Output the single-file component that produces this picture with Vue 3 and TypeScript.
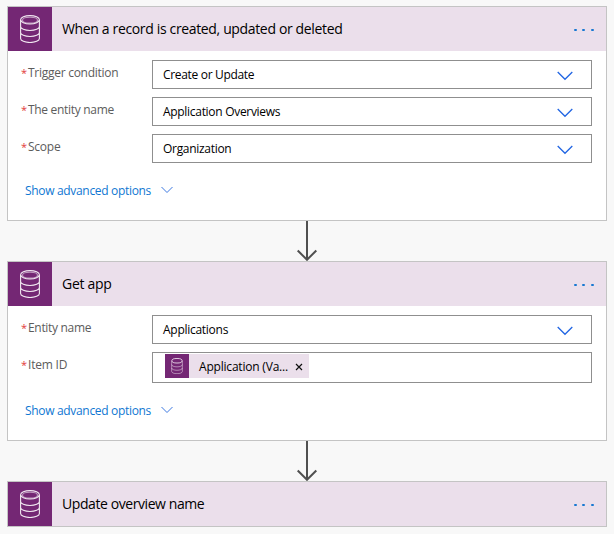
<script setup lang="ts">
interface Field {
  label: string
  value: string
  token?: boolean
  labelSpacing: number
  valueSpacing: number
}
interface Step {
  title: string
  spacing: number
  fields: Field[]
}

const steps: Step[] = [
  {
    title: 'When a record is created, updated or deleted',
    spacing: -0.35,
    fields: [
      { label: 'Trigger condition', value: 'Create or Update', labelSpacing: -0.27, valueSpacing: -0.32 },
      { label: 'The entity name', value: 'Application Overviews', labelSpacing: -0.31, valueSpacing: -0.3 },
      { label: 'Scope', value: 'Organization', labelSpacing: -0.25, valueSpacing: -0.3 },
    ],
  },
  {
    title: 'Get app',
    spacing: -0.3,
    fields: [
      { label: 'Entity name', value: 'Applications', labelSpacing: -0.32, valueSpacing: -0.27 },
      { label: 'Item ID', value: 'Application (Va...', token: true, labelSpacing: -0.2, valueSpacing: -0.2 },
    ],
  },
  { title: 'Update overview name', spacing: -0.42, fields: [] },
]

const cylinder =
  'M.6 5v18.500c0 2.300 4.200 4 9.400 4s9.400-1.700 9.400-4V5M.6 11.500c0 2.300 4.200 4 9.400 4s9.400-1.700 9.400-4M.6 17.500c0 2.300 4.200 4 9.400 4s9.400-1.700 9.400-4'
</script>

<template>
  <main class="flow">
    <template v-for="(step, i) in steps" :key="step.title">
      <svg v-if="i > 0" class="arrow" viewBox="0 0 22 40" aria-hidden="true">
        <path d="M11 0v38M1.700 29.500l9.300 9.300 9.300-9.300" />
      </svg>
      <section class="card">
        <header class="head">
          <span class="badge">
            <svg class="db" viewBox="0 0 20 28" aria-hidden="true">
              <ellipse cx="10" cy="4.800" rx="9.400" ry="4.200" />
              <ellipse cx="10" cy="5.200" rx="7.500" ry="2.900" class="faint" />
              <path :d="cylinder" />
            </svg>
          </span>
          <h2 :style="{ letterSpacing: step.spacing + 'px' }">{{ step.title }}</h2>
          <span class="dots"><i /><i /><i /></span>
        </header>
        <div v-if="step.fields.length" class="body">
          <div v-for="f in step.fields" :key="f.label" class="row">
            <label :style="{ letterSpacing: f.labelSpacing + 'px' }"><b>*</b>{{ f.label }}</label>
            <div class="box" :class="{ tall: f.token }">
              <span v-if="f.token" class="token">
                <span class="mini">
                  <svg viewBox="0 0 20 28" aria-hidden="true">
                    <ellipse cx="10" cy="4.800" rx="9" ry="4" />
                    <path :d="cylinder" class="faint" />
                  </svg>
                </span>
                <span class="name" :style="{ letterSpacing: f.valueSpacing + 'px' }">{{ f.value }}</span>
                <svg class="close" viewBox="0 0 8 8" aria-hidden="true"><path d="M1 1l6 6M7 1L1 7" /></svg>
              </span>
              <template v-else>
                <span :style="{ letterSpacing: f.valueSpacing + 'px' }">{{ f.value }}</span>
                <svg class="chev" viewBox="0 0 16 10" aria-hidden="true"><path d="M.7 1L8 8.300 15.300 1" /></svg>
              </template>
            </div>
          </div>
          <a class="more">
            <span>Show advanced options</span>
            <svg viewBox="0 0 12 8" aria-hidden="true"><path d="M.5 1L6 6.500 11.500 1" /></svg>
          </a>
        </div>
      </section>
    </template>
  </main>
</template>

<style>
body {
  background: #f8f8f8;
}
</style>

<style scoped>
.flow {
  box-sizing: border-box;
  width: 614px;
  height: 534px;
  padding: 6px 7px 0;
  display: flex;
  flex-direction: column;
  background: #f8f8f8;
  font-family: 'Open Sans', 'Noto Sans', sans-serif;
  overflow: hidden;
}
svg {
  display: block;
  fill: none;
  flex: none;
}
.card {
  border: 1px solid #c4c4c4;
  background: #fff;
  flex: none;
}
.head {
  height: 44px;
  display: flex;
  align-items: center;
  background: #ebdfeb;
}
.badge {
  width: 44px;
  height: 44px;
  display: grid;
  place-items: center;
  background: #742774;
}
.db {
  width: 20px;
  height: 28px;
  stroke: #f1e8f1;
  stroke-width: 1.1;
}
.faint {
  opacity: 0.6;
}
h2 {
  flex: 1;
  margin: 0 0 0 10px;
  font-size: 14px;
  line-height: 20px;
  font-weight: 400;
  color: #000;
  white-space: nowrap;
}
.dots {
  display: flex;
  gap: 5.500px;
  margin-right: 12.500px;
  padding-top: 2px;
}
.dots i {
  width: 2.800px;
  height: 2.500px;
  border-radius: 1px;
  background: #1677d2;
}
.body {
  padding: 9px 14px 0 13px;
}
.row {
  display: flex;
  align-items: flex-start;
  margin-bottom: 8px;
}
label {
  width: 131px;
  padding-top: 4px;
  font-size: 12px;
  line-height: 17px;
  color: #5c5c5c;
  white-space: nowrap;
}
label b {
  display: inline-block;
  width: 7px;
  font-size: 11px;
  line-height: 12px;
  font-weight: 400;
  color: #e23a3a;
}
.box {
  box-sizing: border-box;
  width: 440px;
  height: 29px;
  border: 1px solid #8f8f8f;
  padding: 0 18px 0 10px;
  display: flex;
  align-items: center;
  justify-content: space-between;
  font-size: 12px;
  line-height: 17px;
  color: #000;
}
.box.tall {
  height: 31px;
  padding-left: 12px;
  padding-top: 1px;
  align-items: flex-start;
}
.chev {
  width: 16px;
  height: 10px;
  margin-top: 2px;
  stroke: #2266e3;
  stroke-width: 1.3;
}
.token {
  width: 144px;
  height: 24px;
  display: flex;
  align-items: center;
  background: #ebdfeb;
}
.mini {
  width: 24px;
  height: 24px;
  display: grid;
  place-items: center;
  background: #742774;
}
.mini svg {
  width: 12px;
  height: 16px;
  stroke: #e8d8e8;
  stroke-width: 1.6;
}
.name {
  flex: 1;
  margin-left: 10px;
  white-space: nowrap;
}
.close {
  width: 8px;
  height: 8px;
  margin: 2px 6px 0 0;
  stroke: #111;
  stroke-width: 1.2;
}
.more {
  display: flex;
  align-items: center;
  gap: 10px;
  height: 20px;
  margin: 17px 0 0 4px;
  padding-bottom: 20px;
  font-size: 12px;
  letter-spacing: -0.32px;
  color: #0f77d2;
}
.more svg {
  width: 12px;
  height: 8px;
  stroke: #3c78e0;
  stroke-width: 1;
}
.arrow {
  width: 22px;
  height: 40px;
  margin-left: 289px;
  stroke: #505050;
  stroke-width: 2;
}
</style>
